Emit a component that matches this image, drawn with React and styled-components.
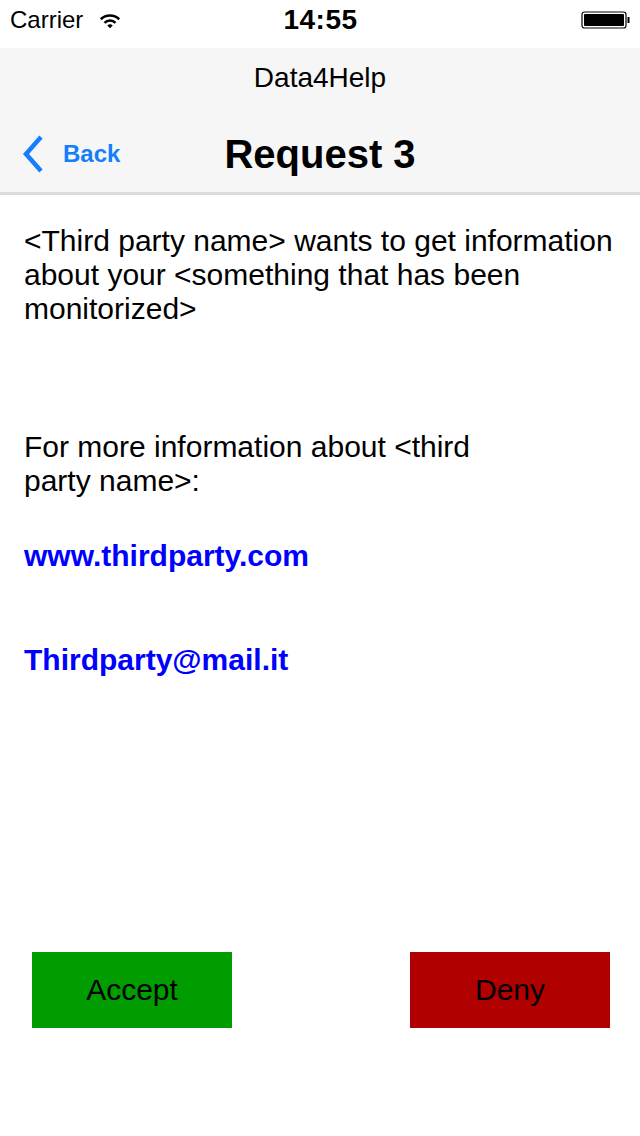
import React from "react";
import styled, { createGlobalStyle } from "styled-components";

const GlobalStyle = createGlobalStyle`
  html, body {
    margin: 0;
    padding: 0;
    background: #ffffff;
  }
  body {
    font-family: "Liberation Sans", Arial, sans-serif;
    color: #000;
  }
`;

const Screen = styled.div`
  width: 640px;
  height: 1136px;
  display: flex;
  flex-direction: column;
  background: #fff;
  overflow: hidden;
`;

const StatusBar = styled.div`
  height: 48px;
  display: grid;
  grid-template-columns: 1fr auto 1fr;
  align-items: center;
  padding: 0 9px 8px 10px;
  box-sizing: border-box;
`;

const Carrier = styled.div`
  display: flex;
  align-items: center;
  gap: 16px;
  font-size: 24px;
`;

const Clock = styled.div`
  font-size: 28px;
  font-weight: 700;
  letter-spacing: 0.5px;
`;

const BatteryWrap = styled.div`
  justify-self: end;
  display: flex;
  align-items: center;
`;

const NavBar = styled.header`
  height: 147px;
  background: #f6f6f6;
  border-bottom: 3px solid #dcdcdc;
  box-sizing: border-box;
  display: flex;
  flex-direction: column;
`;

const Prompt = styled.div`
  height: 60px;
  display: flex;
  align-items: center;
  justify-content: center;
  font-size: 28px;
`;

const TitleRow = styled.div`
  flex: 1;
  display: grid;
  grid-template-columns: 1fr auto 1fr;
  align-items: center;
  padding-top: 8px;
`;

const BackButton = styled.button`
  display: flex;
  align-items: center;
  gap: 18px;
  border: 0;
  background: none;
  padding: 0 0 0 21px;
  font-family: inherit;
  font-size: 24px;
  font-weight: 700;
  color: #147efb;
  cursor: pointer;
  justify-self: start;
`;

const Title = styled.h1`
  margin: 0;
  font-size: 40px;
  font-weight: 700;
`;

const Content = styled.main`
  flex: 1;
  display: flex;
  flex-direction: column;
  padding: 29px 24px 0 24px;
`;

const Text = styled.p`
  margin: ${({ $top }) => $top || 0}px 0 0 0;
  font-size: 30px;
  line-height: 34px;
  max-width: ${({ $narrow }) => ($narrow ? "490px" : "none")};
`;

const Link = styled.a`
  display: block;
  margin-top: ${({ $top }) => $top}px;
  font-size: 30px;
  line-height: 34px;
  font-weight: 700;
  color: #0000ff;
  text-decoration: none;
`;

const Actions = styled.div`
  display: flex;
  justify-content: space-between;
  margin: 275px 6px 0 8px;
`;

const ActionButton = styled.button`
  width: 200px;
  height: 76px;
  border: 0;
  background: ${({ $tone }) => ($tone === "accept" ? "#009c00" : "#b00000")};
  font-family: inherit;
  font-size: 30px;
  color: #000;
  cursor: pointer;
`;

const Wifi = () => (
  <svg width="22" height="17" viewBox="0 0 24 18">
    <path d="M1 6.5 A16 16 0 0 1 23 6.5 L21 8.6 A13 13 0 0 0 3 8.6 Z" fill="#000" />
    <path d="M5 10.5 A10 10 0 0 1 19 10.5 L17 12.6 A7 7 0 0 0 7 12.6 Z" fill="#000" />
    <path d="M9 14.5 A4.5 4.5 0 0 1 15 14.5 L12 17.5 Z" fill="#000" />
  </svg>
);

const Battery = () => (
  <svg width="50" height="18" viewBox="0 0 50 18">
    <rect x="1" y="1" width="44" height="16" rx="2.5" fill="none" stroke="#000" strokeWidth="1.2" />
    <rect x="3" y="3" width="40" height="12" rx="1" fill="#000" />
    <rect x="46.5" y="6" width="2" height="6" fill="#000" />
  </svg>
);

const Chevron = () => (
  <svg width="24" height="40" viewBox="0 0 24 40">
    <path d="M20 3 L5 20 L20 37" fill="none" stroke="#147efb" strokeWidth="4.5" />
  </svg>
);

export default function App() {
  return (
    <>
      <GlobalStyle />
      <Screen>
        <StatusBar>
          <Carrier>
            Carrier
            <Wifi />
          </Carrier>
          <Clock>14:55</Clock>
          <BatteryWrap>
            <Battery />
          </BatteryWrap>
        </StatusBar>
        <NavBar>
          <Prompt>Data4Help</Prompt>
          <TitleRow>
            <BackButton>
              <Chevron />
              Back
            </BackButton>
            <Title>Request 3</Title>
          </TitleRow>
        </NavBar>
        <Content>
          <Text>
            &lt;Third party name&gt; wants to get information about your
            &lt;something that has been monitorized&gt;
          </Text>
          <Text $top={104} $narrow>
            For more information about &lt;third party name&gt;:
          </Text>
          <Link $top={41} href="#">www.thirdparty.com</Link>
          <Link $top={70} href="#">Thirdparty@mail.it</Link>
          <Actions>
            <ActionButton $tone="accept">Accept</ActionButton>
            <ActionButton $tone="deny">Deny</ActionButton>
          </Actions>
        </Content>
      </Screen>
    </>
  );
}
